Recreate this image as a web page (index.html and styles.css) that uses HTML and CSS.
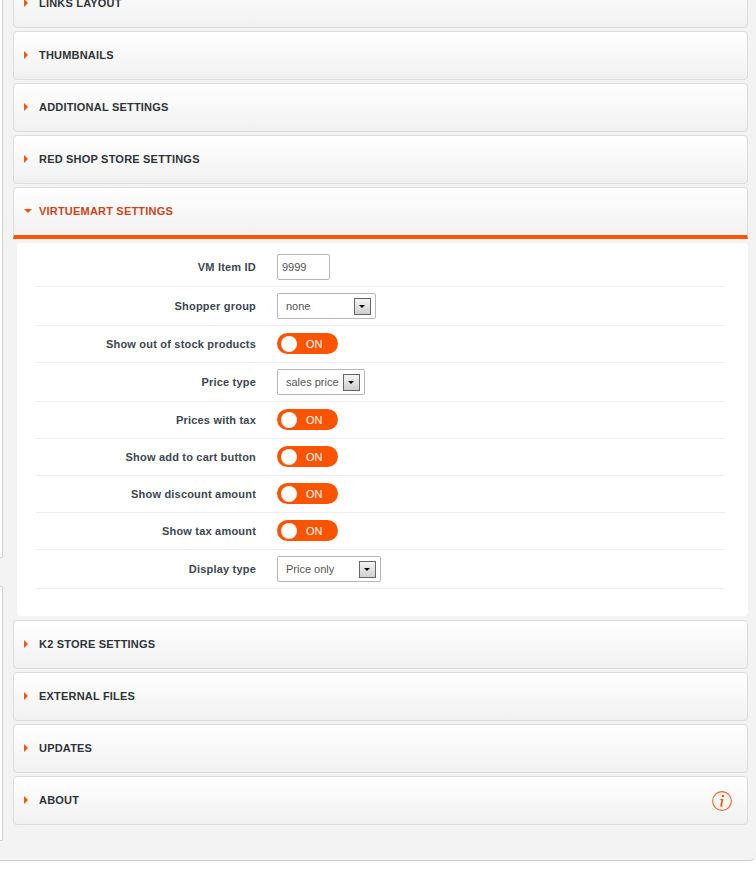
FILE: index.html
```html
<!DOCTYPE html>
<html lang="en">
<head>
  <meta charset="UTF-8" />
  <title>Module settings</title>
  <link rel="stylesheet" href="styles.css">
</head>
<body>
  <div class="page">
    <!-- Left sidebar edge -->
    <div class="side-edge side-edge-top"></div>
    <div class="side-edge side-edge-bottom"></div>

    <div class="panels">
      <div class="panel panel-cut"><span class="arrow"></span><h3>Links Layout</h3></div>
      <div class="panel"><span class="arrow"></span><h3>Thumbnails</h3></div>
      <div class="panel"><span class="arrow"></span><h3>Additional Settings</h3></div>
      <div class="panel"><span class="arrow"></span><h3>Red Shop Store Settings</h3></div>
      <div class="panel panel-open"><span class="arrow arrow-down"></span><h3>VirtueMart Settings</h3></div>

      <div class="panel-body">
        <div class="row">
          <label>VM Item ID</label>
          <input class="text-input" type="text" value="9999" />
        </div>
        <div class="row">
          <label>Shopper group</label>
          <div class="select select-shopper"><span>none</span><span class="select-btn"></span></div>
        </div>
        <div class="row row-switch">
          <label>Show out of stock products</label>
          <div class="switch"><span class="knob"></span>ON</div>
        </div>
        <div class="row">
          <label>Price type</label>
          <div class="select select-price"><span>sales price</span><span class="select-btn"></span></div>
        </div>
        <div class="row row-switch">
          <label>Prices with tax</label>
          <div class="switch"><span class="knob"></span>ON</div>
        </div>
        <div class="row row-switch">
          <label>Show add to cart button</label>
          <div class="switch"><span class="knob"></span>ON</div>
        </div>
        <div class="row row-switch">
          <label>Show discount amount</label>
          <div class="switch"><span class="knob"></span>ON</div>
        </div>
        <div class="row row-switch">
          <label>Show tax amount</label>
          <div class="switch"><span class="knob"></span>ON</div>
        </div>
        <div class="row">
          <label>Display type</label>
          <div class="select select-display"><span>Price only</span><span class="select-btn"></span></div>
        </div>
      </div>

      <div class="panel"><span class="arrow"></span><h3>K2 Store Settings</h3></div>
      <div class="panel"><span class="arrow"></span><h3>External Files</h3></div>
      <div class="panel"><span class="arrow"></span><h3>Updates</h3></div>
      <div class="panel">
        <span class="arrow"></span><h3>About</h3>
        <svg class="info-icon" width="20" height="20" viewBox="0 0 20 20">
          <circle cx="10" cy="10" r="9.4" fill="none" stroke="#f26522" stroke-width="1.1"/>
          <circle cx="10.900" cy="5" r="1.200" fill="#f25a0a"/>
          <path d="M8.400 8.100h3.100l-1.500 6.200c-.1.500.3.600 1.300.1l-.1.700c-1.200.7-3.100.9-3-.6l1.200-5.500H8.300z" fill="#f25a0a"/>
        </svg>
      </div>
    </div>
  </div>
</body>
</html>
```

FILE: styles.css
```css
html, body {
  margin: 0;
  padding: 0;
  background-color: #fff;
  overflow: hidden;
}

body {
  height: 871px;
  font-family: "Liberation Sans", Arial, sans-serif;
}

.page {
  position: relative;
  height: 861px;
  box-sizing: border-box;
  background-color: #f3f3f3;
  border-bottom: 1px solid #cfcfcf;
  border-bottom-right-radius: 6px;
  overflow: hidden;
}

.side-edge {
  position: absolute;
  left: 0;
  width: 2px;
  background-color: #fff;
  border-right: 1px solid #d2d2d2;
}

.side-edge-top {
  top: 0;
  height: 557px;
  border-bottom: 1px solid #d2d2d2;
}

.side-edge-bottom {
  top: 586px;
  height: 253px;
  border-top: 1px solid #d2d2d2;
  border-bottom: 1px solid #d2d2d2;
}

.panels {
  display: flex;
  flex-direction: column;
  gap: 3px;
  margin-left: 13px;
  margin-right: 8px;
  margin-top: -21px;
}

.panel {
  position: relative;
  display: flex;
  align-items: center;
  height: 49px;
  box-sizing: border-box;
  padding-left: 10px;
  padding-bottom: 1px;
  background: linear-gradient(#fff, #f1f1f1);
  border: 1px solid #dcdcdc;
  border-radius: 4px;
}

.panel h3 {
  margin: 0;
  font-size: 11px;
  font-weight: bold;
  text-transform: uppercase;
  letter-spacing: 0.2px;
  color: #2e3338;
}

.arrow {
  width: 0;
  height: 0;
  margin-right: 11px;
  border-left: 4px solid #fa5400;
  border-top: 4px solid transparent;
  border-bottom: 4px solid transparent;
}

.arrow-down {
  width: 0;
  margin-right: 7px;
  border-top: 4px solid #fa5400;
  border-left: 4px solid transparent;
  border-right: 4px solid transparent;
  border-bottom: 0;
}

.panel-open {
  height: 52px;
  border-bottom: 4px solid #fa5400;
  border-radius: 4px 4px 0 0;
}

.panel-open h3 {
  color: #c8461a;
}

.panel-body {
  height: 373px;
  box-sizing: border-box;
  margin: 1px 0 1px 4px;
  padding: 5px 23px 0 19px;
  background-color: #fff;
  border-radius: 4px;
}

.row {
  display: flex;
  align-items: center;
  box-sizing: border-box;
  min-height: 39px;
  padding-top: 3px;
  padding-bottom: 3px;
  border-bottom: 1px solid #ededed;
}

.row-switch {
  min-height: 37px;
}

.row label {
  width: 220px;
  margin-right: 21px;
  margin-bottom: 1px;
  text-align: right;
  font-size: 11px;
  font-weight: bold;
  letter-spacing: 0.2px;
  color: #3c4650;
}

.text-input {
  width: 53px;
  height: 26px;
  box-sizing: border-box;
  padding: 0 4px;
  font-family: "Liberation Sans", Arial, sans-serif;
  font-size: 11px;
  color: #555;
  background-color: #fff;
  border: 1px solid #b8b8b8;
  border-radius: 2px;
}

.select {
  display: flex;
  align-items: center;
  justify-content: space-between;
  height: 26px;
  box-sizing: border-box;
  padding-left: 8px;
  padding-right: 4px;
  font-size: 11px;
  color: #555;
  border: 1px solid #b8b8b8;
  border-radius: 2px;
}

.select-shopper { width: 99px; }
.select-price { width: 88px; }
.select-display { width: 104px; }

.select-btn {
  position: relative;
  width: 17px;
  height: 17px;
  box-sizing: border-box;
  background: linear-gradient(#f4f4f4, #cfcfcf);
  border: 1px solid #666;
}

.select-btn::after {
  content: "";
  position: absolute;
  left: 4px;
  top: 6px;
  border-top: 3px solid #000;
  border-left: 3px solid transparent;
  border-right: 3px solid transparent;
}

.switch {
  display: flex;
  align-items: center;
  width: 61px;
  height: 21px;
  box-sizing: border-box;
  margin-bottom: 1px;
  padding-left: 4px;
  font-size: 11px;
  color: #fff;
  background-color: #fa5400;
  border-radius: 11px;
}

.knob {
  width: 16px;
  height: 16px;
  margin-right: 9px;
  background: radial-gradient(circle at 50% 40%, #fff 55%, #ddd);
  border-radius: 50%;
}

.info-icon {
  position: absolute;
  right: 15px;
  top: 14px;
}
```
